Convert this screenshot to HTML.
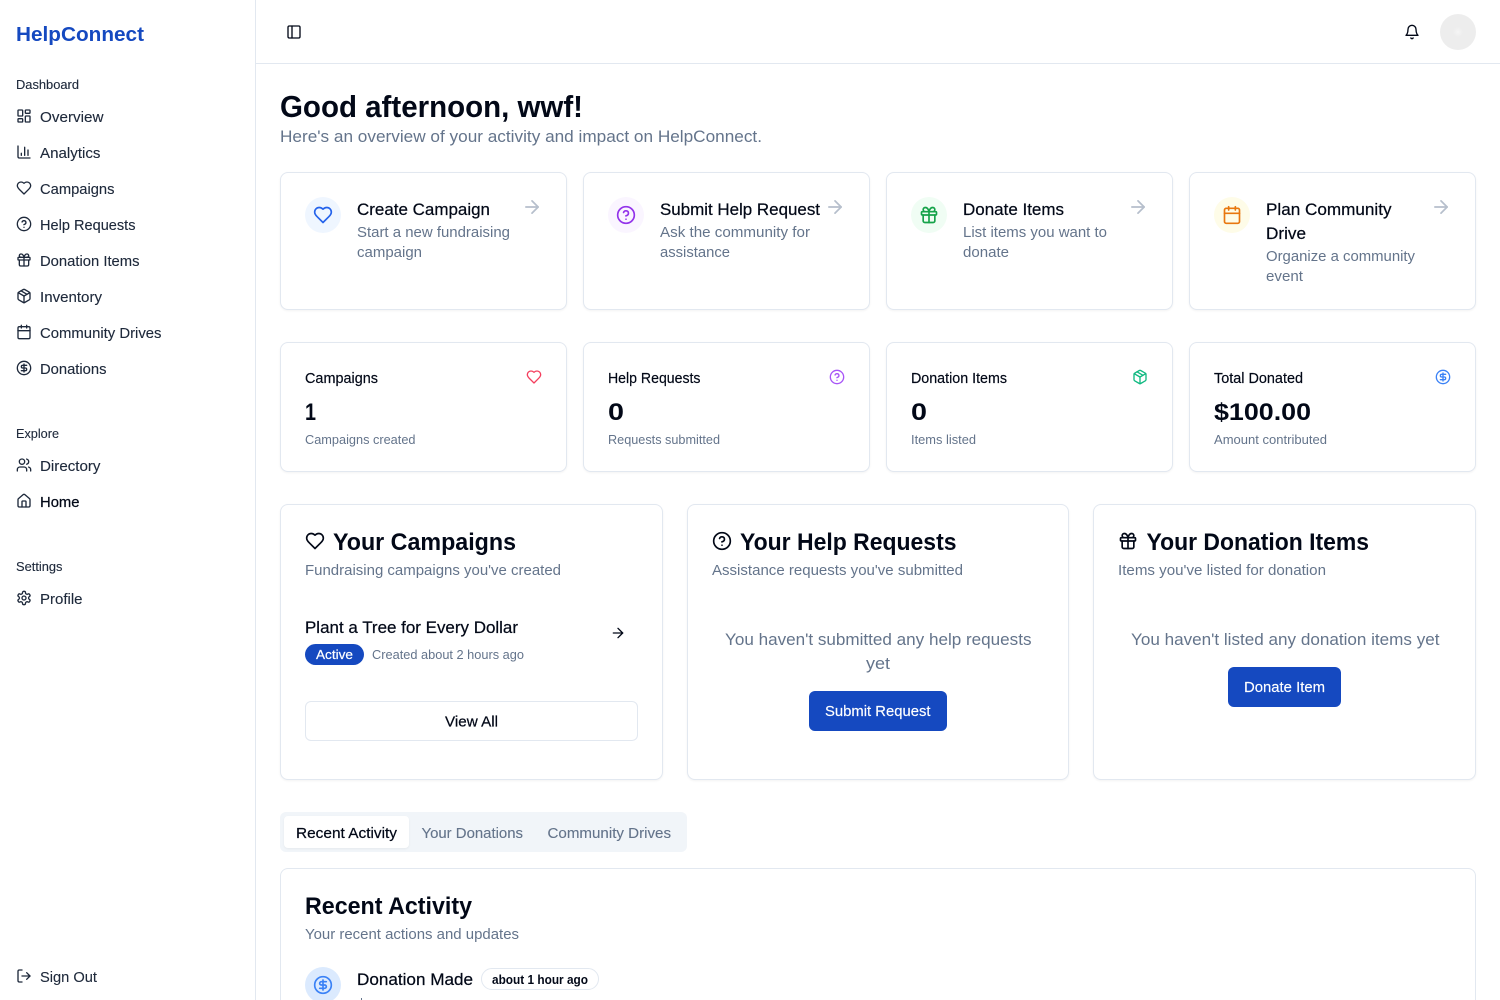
<!DOCTYPE html>
<html lang="en"><head><meta charset="utf-8"><title>HelpConnect</title>
<style>
html,body{margin:0;padding:0;width:1500px;height:1000px;overflow:hidden;background:#fff}
#page{position:relative;width:1500px;height:1000px;overflow:hidden;background:#fff}
.b{position:absolute;box-sizing:border-box}
.card{background:#fff;border:1px solid #e2e8f0;border-radius:8px;box-shadow:0 1px 2px rgba(0,0,0,.05)}
svg.o{position:absolute;left:0;top:0}
text{font-family:"Liberation Sans",Arial,sans-serif;white-space:pre}
.ic{fill:none;stroke:currentColor;stroke-width:2;stroke-linecap:round;stroke-linejoin:round}
.nav{font-size:14.6px;fill:#1e293b;stroke:#1e293b;stroke-width:.12}.lab{font-size:12.5px;fill:#1e293b;stroke:#1e293b;stroke-width:.12}
.at{font-size:16.7px;fill:#020817;stroke:#020817;stroke-width:.22}.ad{font-size:14.6px;fill:#64748b}
.st{font-size:14.6px;fill:#020817;stroke:#020817;stroke-width:.18}.sv{font-size:24.5px;font-weight:700;fill:#020817}.ss{font-size:12.5px;fill:#64748b}
.h2{font-size:24.5px;font-weight:700;fill:#020817}.em{font-size:16.7px;fill:#64748b}
.bt{font-size:14.6px;fill:#fff;stroke:#fff;stroke-width:.15}.tab{font-size:14.6px;fill:#64748b;stroke:#64748b;stroke-width:.12}
.dk{fill:#020817;stroke:#020817;stroke-width:.22}
</style></head><body>
<div id="page">
<div class="b" style="left:255px;top:0;width:1px;height:1000px;background:#e2e8f0"></div>
<div class="b" style="left:256px;top:63px;width:1244px;height:1px;background:#e2e8f0"></div>
<div class="b" style="left:1440px;top:14px;width:36px;height:36px;border-radius:50%;background:radial-gradient(circle,#f5f5f5 0,#ededed 5px)"></div>

<div class="b card" style="left:280px;top:172px;width:287px;height:138px"></div>
<div class="b card" style="left:583px;top:172px;width:287px;height:138px"></div>
<div class="b card" style="left:886px;top:172px;width:287px;height:138px"></div>
<div class="b card" style="left:1189px;top:172px;width:287px;height:138px"></div>
<div class="b" style="left:305px;top:197px;width:36px;height:36px;border-radius:50%;background:#eff6ff"></div>
<div class="b" style="left:608px;top:197px;width:36px;height:36px;border-radius:50%;background:#faf5ff"></div>
<div class="b" style="left:911px;top:197px;width:36px;height:36px;border-radius:50%;background:#f0fdf4"></div>
<div class="b" style="left:1214px;top:197px;width:36px;height:36px;border-radius:50%;background:#fefce8"></div>

<div class="b card" style="left:280px;top:342px;width:287px;height:130px"></div>
<div class="b card" style="left:583px;top:342px;width:287px;height:130px"></div>
<div class="b card" style="left:886px;top:342px;width:287px;height:130px"></div>
<div class="b card" style="left:1189px;top:342px;width:287px;height:130px"></div>

<div class="b card" style="left:280px;top:504px;width:383px;height:276px"></div>
<div class="b card" style="left:687px;top:504px;width:382px;height:276px"></div>
<div class="b card" style="left:1093px;top:504px;width:383px;height:276px"></div>
<div class="b" style="left:305px;top:644px;width:59px;height:21px;border-radius:11px;background:#1549c0"></div>
<div class="b" style="left:305px;top:701px;width:333px;height:40px;border:1px solid #e2e8f0;border-radius:6px;background:#fff"></div>
<div class="b" style="left:809px;top:691px;width:138px;height:40px;border-radius:6px;background:#1549c0"></div>
<div class="b" style="left:1228px;top:667px;width:113px;height:40px;border-radius:6px;background:#1549c0"></div>

<div class="b" style="left:280px;top:812px;width:407px;height:40px;border-radius:6px;background:#f1f5f9"></div>
<div class="b" style="left:284px;top:816px;width:125px;height:32px;border-radius:4px;background:#fff;box-shadow:0 1px 2px rgba(0,0,0,.05)"></div>
<div class="b" style="left:280px;top:868px;width:1196px;height:132px;background:#fff;border:1px solid #e2e8f0;border-bottom:0;border-radius:8px 8px 0 0"></div>
<div class="b" style="left:305px;top:967px;width:36px;height:33px;overflow:hidden"><div style="width:36px;height:36px;border-radius:50%;background:#dbeafe"></div></div>
<div class="b" style="left:481px;top:968px;width:118px;height:22px;border:1px solid #e2e8f0;border-radius:11px;background:#fff"></div>
<div class="b" style="left:361px;top:998px;width:1px;height:2px;background:#64748b"></div>

<svg class="o" width="1500" height="1000" viewBox="0 0 1500 1000" xmlns="http://www.w3.org/2000/svg">
<defs>
<symbol id="dash" viewBox="0 0 24 24"><g class="ic"><rect x="3" y="3" width="7" height="9" rx="1"/><rect x="14" y="3" width="7" height="5" rx="1"/><rect x="14" y="12" width="7" height="9" rx="1"/><rect x="3" y="16" width="7" height="5" rx="1"/></g></symbol>
<symbol id="chart" viewBox="0 0 24 24"><g class="ic"><path d="M3 3v16a2 2 0 0 0 2 2h16"/><path d="M18 17V9"/><path d="M13 17V5"/><path d="M8 17v-3"/></g></symbol>
<symbol id="heart" viewBox="0 0 24 24"><g class="ic"><path d="M19 14c1.49-1.46 3-3.21 3-5.5A5.5 5.5 0 0 0 16.5 3c-1.76 0-3 .5-4.5 2-1.5-1.5-2.74-2-4.5-2A5.5 5.5 0 0 0 2 8.5c0 2.3 1.5 4.05 3 5.5l7 7Z"/></g></symbol>
<symbol id="help" viewBox="0 0 24 24"><g class="ic"><circle cx="12" cy="12" r="10"/><path d="M9.09 9a3 3 0 0 1 5.83 1c0 2-3 3-3 3"/><path d="M12 17h.01"/></g></symbol>
<symbol id="gift" viewBox="0 0 24 24"><g class="ic"><rect x="3" y="8" width="18" height="4" rx="1"/><path d="M12 8v13"/><path d="M19 12v7a2 2 0 0 1-2 2H7a2 2 0 0 1-2-2v-7"/><path d="M7.5 8a2.5 2.5 0 0 1 0-5A4.8 8 0 0 1 12 8a4.8 8 0 0 1 4.5-5 2.5 2.5 0 0 1 0 5"/></g></symbol>
<symbol id="pkg" viewBox="0 0 24 24"><g class="ic"><path d="m7.5 4.27 9 5.15"/><path d="M21 8a2 2 0 0 0-1-1.73l-7-4a2 2 0 0 0-2 0l-7 4A2 2 0 0 0 3 8v8a2 2 0 0 0 1 1.73l7 4a2 2 0 0 0 2 0l7-4A2 2 0 0 0 21 16Z"/><path d="m3.3 7 8.7 5 8.7-5"/><path d="M12 22V12"/></g></symbol>
<symbol id="cal" viewBox="0 0 24 24"><g class="ic"><path d="M8 2v4"/><path d="M16 2v4"/><rect x="3" y="4" width="18" height="18" rx="2"/><path d="M3 10h18"/></g></symbol>
<symbol id="dollar" viewBox="0 0 24 24"><g class="ic"><circle cx="12" cy="12" r="10"/><path d="M16 8h-6a2 2 0 1 0 0 4h4a2 2 0 1 1 0 4H8"/><path d="M12 18V6"/></g></symbol>
<symbol id="users" viewBox="0 0 24 24"><g class="ic"><path d="M16 21v-2a4 4 0 0 0-4-4H6a4 4 0 0 0-4 4v2"/><circle cx="9" cy="7" r="4"/><path d="M22 21v-2a4 4 0 0 0-3-3.87"/><path d="M16 3.13a4 4 0 0 1 0 7.75"/></g></symbol>
<symbol id="home" viewBox="0 0 24 24"><g class="ic"><path d="M15 21v-8a1 1 0 0 0-1-1h-4a1 1 0 0 0-1 1v8"/><path d="M3 10a2 2 0 0 1 .709-1.528l7-5.999a2 2 0 0 1 2.582 0l7 5.999A2 2 0 0 1 21 10v9a2 2 0 0 1-2 2H5a2 2 0 0 1-2-2z"/></g></symbol>
<symbol id="gear" viewBox="0 0 24 24"><g class="ic"><path d="M12.22 2h-.44a2 2 0 0 0-2 2v.18a2 2 0 0 1-1 1.73l-.43.25a2 2 0 0 1-2 0l-.15-.08a2 2 0 0 0-2.73.73l-.22.38a2 2 0 0 0 .73 2.73l.15.1a2 2 0 0 1 1 1.72v.51a2 2 0 0 1-1 1.74l-.15.09a2 2 0 0 0-.73 2.73l.22.38a2 2 0 0 0 2.73.73l.15-.08a2 2 0 0 1 2 0l.43.25a2 2 0 0 1 1 1.73V20a2 2 0 0 0 2 2h.44a2 2 0 0 0 2-2v-.18a2 2 0 0 1 1-1.73l.43-.25a2 2 0 0 1 2 0l.15.08a2 2 0 0 0 2.73-.73l.22-.39a2 2 0 0 0-.73-2.73l-.15-.08a2 2 0 0 1-1-1.74v-.5a2 2 0 0 1 1-1.74l.15-.09a2 2 0 0 0 .73-2.73l-.22-.38a2 2 0 0 0-2.73-.73l-.15.08a2 2 0 0 1-2 0l-.43-.25a2 2 0 0 1-1-1.73V4a2 2 0 0 0-2-2z"/><circle cx="12" cy="12" r="3"/></g></symbol>
<symbol id="logout" viewBox="0 0 24 24"><g class="ic"><path d="M9 21H5a2 2 0 0 1-2-2V5a2 2 0 0 1 2-2h4"/><polyline points="16 17 21 12 16 7"/><path d="M21 12H9"/></g></symbol>
<symbol id="panel" viewBox="0 0 24 24"><g class="ic"><rect x="3" y="3" width="18" height="18" rx="2"/><path d="M9 3v18"/></g></symbol>
<symbol id="bell" viewBox="0 0 24 24"><g class="ic"><path d="M6 8a6 6 0 0 1 12 0c0 7 3 9 3 9H3s3-2 3-9"/><path d="M10.3 21a1.94 1.94 0 0 0 3.4 0"/></g></symbol>
<symbol id="arrow" viewBox="0 0 24 24"><g class="ic"><path d="M5 12h14"/><path d="m12 5 7 7-7 7"/></g></symbol>
</defs>

<!-- Sidebar -->
<text x="16" y="41" font-size="20.5" font-weight="700" fill="#1549c0" textLength="128" lengthAdjust="spacingAndGlyphs">HelpConnect</text>
<text class="lab" x="16" y="89" textLength="63" lengthAdjust="spacingAndGlyphs">Dashboard</text>
<g style="color:#1e293b">
<use href="#dash" x="16" y="108" width="16" height="16"/>
<use href="#chart" x="16" y="144" width="16" height="16"/>
<use href="#heart" x="16" y="180" width="16" height="16"/>
<use href="#help" x="16" y="216" width="16" height="16"/>
<use href="#gift" x="16" y="252" width="16" height="16"/>
<use href="#pkg" x="16" y="288" width="16" height="16"/>
<use href="#cal" x="16" y="324" width="16" height="16"/>
<use href="#dollar" x="16" y="360" width="16" height="16"/>
<use href="#users" x="16" y="457" width="16" height="16"/>
<use href="#home" x="16" y="493" width="16" height="16"/>
<use href="#gear" x="16" y="590" width="16" height="16"/>
<use href="#logout" x="16" y="968" width="16" height="16"/>
</g>
<text class="nav" x="40" y="122" textLength="63.5" lengthAdjust="spacingAndGlyphs">Overview</text>
<text class="nav" x="40" y="158" textLength="60.5" lengthAdjust="spacingAndGlyphs">Analytics</text>
<text class="nav" x="40" y="194" textLength="74.5" lengthAdjust="spacingAndGlyphs">Campaigns</text>
<text class="nav" x="40" y="230" textLength="95.5" lengthAdjust="spacingAndGlyphs">Help Requests</text>
<text class="nav" x="40" y="266" textLength="99.5" lengthAdjust="spacingAndGlyphs">Donation Items</text>
<text class="nav" x="40" y="302" textLength="62" lengthAdjust="spacingAndGlyphs">Inventory</text>
<text class="nav" x="40" y="338" textLength="121.5" lengthAdjust="spacingAndGlyphs">Community Drives</text>
<text class="nav" x="40" y="374" textLength="66.5" lengthAdjust="spacingAndGlyphs">Donations</text>
<text class="lab" x="16" y="438" textLength="43" lengthAdjust="spacingAndGlyphs">Explore</text>
<text class="nav" x="40" y="471" textLength="60.5" lengthAdjust="spacingAndGlyphs">Directory</text>
<text class="nav dk" x="40" y="507" textLength="39.5" lengthAdjust="spacingAndGlyphs">Home</text>
<text class="lab" x="16" y="571" textLength="46.5" lengthAdjust="spacingAndGlyphs">Settings</text>
<text class="nav" x="40" y="604" textLength="42.5" lengthAdjust="spacingAndGlyphs">Profile</text>
<text class="nav" x="40" y="982" textLength="57" lengthAdjust="spacingAndGlyphs">Sign Out</text>

<!-- Header -->
<use href="#panel" x="286" y="24" width="16" height="16" style="color:#020817"/>
<use href="#bell" x="1404" y="24" width="16" height="16" style="color:#020817"/>

<!-- Greeting -->
<text x="280" y="117" font-size="30.5" font-weight="700" fill="#020817" textLength="303" lengthAdjust="spacingAndGlyphs">Good afternoon, wwf!</text>
<text x="280" y="142" font-size="16.7" fill="#64748b" textLength="482" lengthAdjust="spacingAndGlyphs">Here's an overview of your activity and impact on HelpConnect.</text>

<!-- Action cards -->
<use href="#heart" x="313" y="205" width="20" height="20" style="color:#2563eb"/>
<use href="#help" x="616" y="205" width="20" height="20" style="color:#9333ea"/>
<use href="#gift" x="919" y="205" width="20" height="20" style="color:#16a34a"/>
<use href="#cal" x="1222" y="205" width="20" height="20" style="color:#e8770f"/>
<g style="color:#b6bfcc">
<use href="#arrow" x="521.5" y="196.5" width="21" height="21"/>
<use href="#arrow" x="824.5" y="196.5" width="21" height="21"/>
<use href="#arrow" x="1127.5" y="196.5" width="21" height="21"/>
<use href="#arrow" x="1430.5" y="196.5" width="21" height="21"/>
</g>
<text class="at" x="357" y="215" textLength="133" lengthAdjust="spacingAndGlyphs">Create Campaign</text>
<text class="ad" x="357" y="237" textLength="153" lengthAdjust="spacingAndGlyphs">Start a new fundraising</text>
<text class="ad" x="357" y="257" textLength="65" lengthAdjust="spacingAndGlyphs">campaign</text>
<text class="at" x="660" y="215" textLength="160" lengthAdjust="spacingAndGlyphs">Submit Help Request</text>
<text class="ad" x="660" y="237" textLength="150" lengthAdjust="spacingAndGlyphs">Ask the community for</text>
<text class="ad" x="660" y="257" textLength="70" lengthAdjust="spacingAndGlyphs">assistance</text>
<text class="at" x="963" y="215" textLength="101" lengthAdjust="spacingAndGlyphs">Donate Items</text>
<text class="ad" x="963" y="237" textLength="144" lengthAdjust="spacingAndGlyphs">List items you want to</text>
<text class="ad" x="963" y="257" textLength="46" lengthAdjust="spacingAndGlyphs">donate</text>
<text class="at" x="1266" y="215" textLength="125.5" lengthAdjust="spacingAndGlyphs">Plan Community</text>
<text class="at" x="1266" y="239" textLength="40" lengthAdjust="spacingAndGlyphs">Drive</text>
<text class="ad" x="1266" y="261" textLength="149" lengthAdjust="spacingAndGlyphs">Organize a community</text>
<text class="ad" x="1266" y="281" textLength="37" lengthAdjust="spacingAndGlyphs">event</text>

<!-- Stat cards -->
<use href="#heart" x="526" y="369" width="16" height="16" style="color:#f43f5e"/>
<use href="#help" x="829" y="369" width="16" height="16" style="color:#a855f7"/>
<use href="#pkg" x="1132" y="369" width="16" height="16" style="color:#10b981"/>
<use href="#dollar" x="1435" y="369" width="16" height="16" style="color:#3b82f6"/>
<text class="st" x="305" y="383" textLength="73" lengthAdjust="spacingAndGlyphs">Campaigns</text>
<text class="sv" x="305" y="420" textLength="11" lengthAdjust="spacingAndGlyphs">1</text>
<text class="ss" x="305" y="444" textLength="110.5" lengthAdjust="spacingAndGlyphs">Campaigns created</text>
<text class="st" x="608" y="383" textLength="92.5" lengthAdjust="spacingAndGlyphs">Help Requests</text>
<text class="sv" x="608" y="420" textLength="16" lengthAdjust="spacingAndGlyphs">0</text>
<text class="ss" x="608" y="444" textLength="112" lengthAdjust="spacingAndGlyphs">Requests submitted</text>
<text class="st" x="911" y="383" textLength="96" lengthAdjust="spacingAndGlyphs">Donation Items</text>
<text class="sv" x="911" y="420" textLength="16" lengthAdjust="spacingAndGlyphs">0</text>
<text class="ss" x="911" y="444" textLength="65" lengthAdjust="spacingAndGlyphs">Items listed</text>
<text class="st" x="1214" y="383" textLength="89" lengthAdjust="spacingAndGlyphs">Total Donated</text>
<text class="sv" x="1214" y="420" textLength="97" lengthAdjust="spacingAndGlyphs">$100.00</text>
<text class="ss" x="1214" y="444" textLength="113" lengthAdjust="spacingAndGlyphs">Amount contributed</text>

<!-- Section cards -->
<g style="color:#020817">
<use href="#heart" x="305" y="531" width="20" height="20"/>
<use href="#help" x="712" y="531" width="20" height="20"/>
<use href="#gift" x="1118" y="531" width="20" height="20"/>
<use href="#arrow" x="610" y="625" width="16" height="16"/>
</g>
<text class="h2" x="333" y="550" textLength="183" lengthAdjust="spacingAndGlyphs">Your Campaigns</text>
<text class="ad" x="305" y="575" textLength="256" lengthAdjust="spacingAndGlyphs">Fundraising campaigns you've created</text>
<text class="at" x="305" y="633" textLength="213" lengthAdjust="spacingAndGlyphs">Plant a Tree for Every Dollar</text>
<text x="316" y="659" font-size="12.5" fill="#fff" stroke="#fff" stroke-width=".2" textLength="37" lengthAdjust="spacingAndGlyphs">Active</text>
<text class="ss" x="372" y="659" textLength="152" lengthAdjust="spacingAndGlyphs">Created about 2 hours ago</text>
<text class="dk" x="445" y="726.5" font-size="14.6" textLength="53" lengthAdjust="spacingAndGlyphs">View All</text>

<text class="h2" x="740" y="550" textLength="216.5" lengthAdjust="spacingAndGlyphs">Your Help Requests</text>
<text class="ad" x="712" y="575" textLength="251" lengthAdjust="spacingAndGlyphs">Assistance requests you've submitted</text>
<text class="em" x="725" y="645" textLength="306.5" lengthAdjust="spacingAndGlyphs">You haven't submitted any help requests</text>
<text class="em" x="866" y="669" textLength="24" lengthAdjust="spacingAndGlyphs">yet</text>
<text class="bt" x="825" y="716" textLength="105.5" lengthAdjust="spacingAndGlyphs">Submit Request</text>

<text class="h2" x="1146.5" y="550" textLength="222.5" lengthAdjust="spacingAndGlyphs">Your Donation Items</text>
<text class="ad" x="1118" y="575" textLength="208" lengthAdjust="spacingAndGlyphs">Items you've listed for donation</text>
<text class="em" x="1131" y="645" textLength="308.5" lengthAdjust="spacingAndGlyphs">You haven't listed any donation items yet</text>
<text class="bt" x="1244" y="692" textLength="81" lengthAdjust="spacingAndGlyphs">Donate Item</text>

<!-- Tabs -->
<text class="dk" x="296" y="838" font-size="14.6" textLength="101" lengthAdjust="spacingAndGlyphs">Recent Activity</text>
<text class="tab" x="421.5" y="838" textLength="101.5" lengthAdjust="spacingAndGlyphs">Your Donations</text>
<text class="tab" x="547.5" y="838" textLength="123.5" lengthAdjust="spacingAndGlyphs">Community Drives</text>

<!-- Recent activity -->
<text class="h2" x="305" y="914" textLength="167" lengthAdjust="spacingAndGlyphs">Recent Activity</text>
<text class="ad" x="305" y="939" textLength="214" lengthAdjust="spacingAndGlyphs">Your recent actions and updates</text>
<use href="#dollar" x="313" y="975" width="20" height="20" style="color:#3b82f6"/>
<text class="at" x="357" y="985" textLength="116" lengthAdjust="spacingAndGlyphs">Donation Made</text>
<text x="492" y="984" font-size="12.5" font-weight="700" fill="#020817" textLength="96" lengthAdjust="spacingAndGlyphs">about 1 hour ago</text>
</svg>
</div>
</body></html>
